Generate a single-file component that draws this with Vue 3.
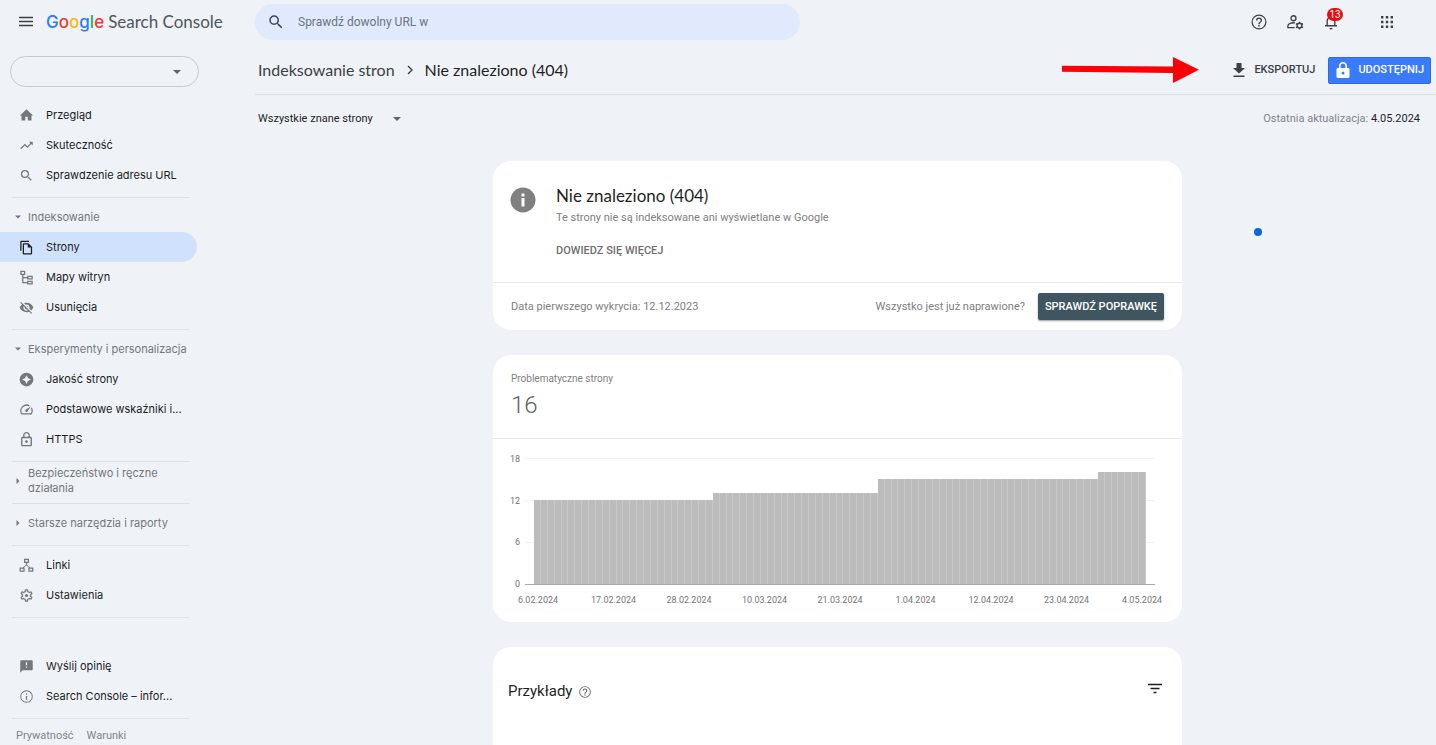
<script setup>
import { ref } from 'vue'

const icons = {
  home: 'M10 20v-6h4v6h6v-8h2.500L12 2 1.500 12H4v8z',
  trend: 'M16 6l2.290 2.290-4.880 4.880-4-4L2 16.590 3.410 18l6-6 4 4 6.300-6.290L22 12V6z',
  search: 'M15.500 14h-.79l-.28-.27A6.470 6.470 0 0 0 16 9.500 6.500 6.500 0 1 0 9.500 16c1.610 0 3.090-.59 4.230-1.570l.27.28v.79l5 4.990L20.490 19l-4.990-5zm-6 0C7.010 14 5 11.990 5 9.500S7.010 5 9.500 5 14 7.010 14 9.500 11.990 14 9.500 14z',
  pages: 'M16 1H4c-1.100 0-2 .9-2 2v14h2V3h12V1zm-1 4H8c-1.100 0-1.990.9-1.990 2L6 21c0 1.100.89 2 1.990 2H19c1.100 0 2-.9 2-2V11l-6-6zM8 21V7h6v5h5v9H8z',
  sitemap: 'M2 1h8v7H7v3h6V9h9v6h-9v-2H7v6h6v-2h9v6h-9v-2H5V8H2zM4 3v3h4V3zM15 11v2h5v-2zM15 19v2h5v-2z',
  hidden: 'M12 7c2.760 0 5 2.240 5 5 0 .65-.13 1.260-.36 1.830l2.920 2.920c1.510-1.260 2.700-2.890 3.430-4.750-1.730-4.390-6-7.500-11-7.500-1.400 0-2.740.25-3.980.7l2.160 2.160C10.740 7.130 11.350 7 12 7zM2 4.270l2.280 2.280.46.46A11.800 11.800 0 0 0 1 12c1.730 4.390 6 7.500 11 7.500 1.550 0 3.030-.3 4.380-.84l.42.42L19.730 22 21 20.730 3.270 3 2 4.270zM7.530 9.800l1.550 1.550c-.05.21-.08.43-.08.65 0 1.660 1.340 3 3 3 .22 0 .44-.03.65-.08l1.550 1.550c-.67.33-1.410.53-2.200.53-2.760 0-5-2.240-5-5 0-.79.2-1.530.53-2.200zm4.310-.78 3.150 3.150.02-.16c0-1.660-1.340-3-3-3l-.17.01z',
  quality: 'M12 1a11 11 0 1 0 0 22 11 11 0 0 0 0-22zm0 4 2.300 4.700L19 12l-4.700 2.300L12 19l-2.300-4.700L5 12l4.700-2.300z',
  speed: 'M20.380 8.570l-1.230 1.850a8 8 0 0 1-.22 7.580H5.070A8 8 0 0 1 15.580 6.850l1.850-1.230A10 10 0 0 0 3.350 19a2 2 0 0 0 1.720 1h13.850a2 2 0 0 0 1.740-1 10 10 0 0 0-.27-10.440zm-9.790 6.840a2 2 0 0 0 2.830 0l5.660-8.490-8.490 5.660a2 2 0 0 0 0 2.830z',
  lock: 'M18 8h-1V6c0-2.760-2.240-5-5-5S7 3.240 7 6v2H6c-1.100 0-2 .9-2 2v10c0 1.100.9 2 2 2h12c1.100 0 2-.9 2-2V10c0-1.100-.9-2-2-2zM9 6c0-1.660 1.340-3 3-3s3 1.340 3 3v2H9V6zm9 14H6V10h12v10zm-6-3c1.100 0 2-.9 2-2s-.9-2-2-2-2 .9-2 2 .9 2 2 2z',
  links: 'M8 1h8v7h-3v3l5 4h5v7h-8v-7h1l-4-3-4 3h1v7H1v-7h5l5-4V8H8zM10 3v3h4V3zM3 17v3h4v-3zM17 17v3h4v-3z',
  gear: 'M19.430 12.980c.04-.32.07-.64.07-.98s-.03-.66-.07-.98l2.110-1.650c.19-.15.24-.42.12-.64l-2-3.460c-.09-.16-.26-.25-.44-.25-.06 0-.12.01-.17.03l-2.490 1c-.52-.4-1.080-.73-1.690-.98l-.38-2.650A.49.49 0 0 0 14 2h-4c-.25 0-.46.18-.49.42l-.38 2.650c-.61.25-1.170.59-1.690.98l-2.490-1a.57.57 0 0 0-.18-.03c-.17 0-.34.09-.43.25l-2 3.460c-.13.22-.07.49.12.64l2.110 1.650c-.04.32-.07.65-.07.98s.03.66.07.98l-2.110 1.650c-.19.15-.24.42-.12.64l2 3.460c.09.16.26.25.44.25.06 0 .12-.01.17-.03l2.490-1c.52.4 1.080.73 1.690.98l.38 2.650c.03.24.24.42.49.42h4c.25 0 .46-.18.49-.42l.38-2.650c.61-.25 1.170-.59 1.690-.98l2.490 1c.06.02.12.03.18.03.17 0 .34-.09.43-.25l2-3.460c.12-.22.07-.49-.12-.64l-2.110-1.650zm-1.980-1.710c.04.31.05.52.05.73 0 .21-.02.43-.05.73l-.14 1.130.89.7 1.080.84-.7 1.210-1.270-.51-1.040-.42-.9.68c-.43.32-.84.56-1.250.73l-1.060.43-.16 1.130-.2 1.350h-1.400l-.19-1.350-.16-1.130-1.060-.43c-.43-.18-.83-.41-1.230-.71l-.91-.7-1.060.43-1.270.51-.7-1.210 1.080-.84.89-.7-.14-1.130c-.03-.31-.05-.54-.05-.74s.02-.43.05-.73l.14-1.130-.89-.7-1.080-.84.7-1.210 1.270.51 1.040.42.9-.68c.43-.32.84-.56 1.250-.73l1.060-.43.16-1.130.2-1.350h1.390l.19 1.350.16 1.130 1.060.43c.43.18.83.41 1.230.71l.91.7 1.060-.43 1.270-.51.7 1.210-1.070.85-.89.7.14 1.130zM12 9.500a2.500 2.500 0 1 0 0 5 2.500 2.500 0 0 0 0-5z',
  feedback: 'M20 2H4c-1.100 0-1.990.9-1.990 2L2 22l4-4h14c1.100 0 2-.9 2-2V4c0-1.100-.9-2-2-2zm-7 12h-2v-2h2v2zm0-4h-2V5h2v5z',
  info: 'M11 7h2v2h-2zm0 4h2v6h-2zm1-9a10 10 0 1 0 0 20 10 10 0 0 0 0-20zm0 18.500a8.500 8.500 0 1 1 0-17 8.500 8.500 0 0 1 0 17z',
  help: 'M11 18h2v-2h-2v2zm1-16a10 10 0 1 0 0 20 10 10 0 0 0 0-20zm0 18.400a8.400 8.400 0 1 1 0-16.800 8.400 8.400 0 0 1 0 16.800zM12 6a4 4 0 0 0-4 4h1.800c0-1.200 1-2.200 2.200-2.200s2.200 1 2.200 2.200c0 2-3.100 1.750-3.100 5h1.800c0-2.250 3.100-2.500 3.100-5a4 4 0 0 0-4-4z',
}

const groups = [
  {
    items: [
      { icon: 'home', label: 'Przegląd' },
      { icon: 'trend', label: 'Skuteczność' },
      { icon: 'search', label: 'Sprawdzenie adresu URL' },
    ],
  },
  {
    title: 'Indeksowanie',
    open: true,
    items: [
      { icon: 'pages', label: 'Strony', active: true },
      { icon: 'sitemap', label: 'Mapy witryn' },
      { icon: 'hidden', label: 'Usunięcia' },
    ],
  },
  {
    title: 'Eksperymenty i personalizacja',
    open: true,
    items: [
      { icon: 'quality', label: 'Jakość strony' },
      { icon: 'speed', label: 'Podstawowe wskaźniki i...' },
      { icon: 'lock', label: 'HTTPS', box: '2 1 20 22' },
    ],
  },
  { title: 'Bezpieczeństwo i ręczne działania', items: [] },
  { title: 'Starsze narzędzia i raporty', items: [] },
  {
    items: [
      { icon: 'links', label: 'Linki' },
      { icon: 'gear', label: 'Ustawienia' },
    ],
  },
]

const support = [
  { icon: 'feedback', label: 'Wyślij opinię' },
  { icon: 'info', label: 'Search Console – infor...' },
]

const query = ref('')
const maxValue = 18
const ticks = [18, 12, 6, 0]
const runs = [[26, 12], [24, 13], [32, 15], [7, 16]]
const bars = runs.flatMap(([days, value]) => Array(days).fill(value))
const dates = ['6.02.2024', '17.02.2024', '28.02.2024', '10.03.2024', '21.03.2024', '1.04.2024', '12.04.2024', '23.04.2024', '4.05.2024']
</script>

<template>
  <div class="shell">
    <header class="topbar">
      <div class="brand">
        <button class="icon-btn" aria-label="Menu">
          <svg class="i16" viewBox="0 0 16 16"><path d="M1 3.500h14M1 7.500h14M1 11.500h14" stroke="currentColor" stroke-width="1.400" /></svg>
        </button>
        <a href="#" class="logo"><span class="google"><span class="b">G</span><span class="r">o</span><span class="y">o</span><span class="b">g</span><span class="g">l</span><span class="r">e</span></span><span>Search Console</span></a>
      </div>
      <label class="search">
        <svg class="i18" viewBox="0 0 24 24"><path :d="icons.search" /></svg>
        <input v-model="query" type="text" placeholder="Sprawdź dowolny URL w" aria-label="Sprawdź dowolny URL" />
      </label>
      <div class="tools">
        <button class="icon-btn" aria-label="Pomoc"><svg class="i18" viewBox="0 0 24 24"><path :d="icons.help" /></svg></button>
        <button class="icon-btn" aria-label="Użytkownicy">
          <svg class="i18 outline" viewBox="0 0 24 24">
            <circle cx="10" cy="7" r="3.300" />
            <path d="M12 13.200c-4-.8-9.500 1-9.500 4V19.500H11.500" />
            <circle cx="18" cy="16.800" r="3.200" />
            <path d="M18 11.500v2M18 20v2M13.400 14.100l1.800 1.100M20.800 18.400l1.800 1.100M13.400 19.500l1.800-1.100M20.800 15.200l1.800-1.100" />
          </svg>
        </button>
        <button class="icon-btn bell" aria-label="Powiadomienia">
          <svg class="i18" viewBox="0 0 24 24"><path d="M12 22a2 2 0 0 0 2-2h-4a2 2 0 0 0 2 2zm6-6v-5c0-3.070-1.630-5.640-4.500-6.320V4a1.500 1.500 0 0 0-3 0v.68C7.640 5.360 6 7.920 6 11v5H4v2h16v-2zm-1.800 0H7.800v-5c0-2.480 1.510-4.700 4.200-4.700s4.200 2.220 4.200 4.700z" /></svg>
          <span class="badge">13</span>
        </button>
        <button class="icon-btn apps" aria-label="Aplikacje Google">
          <svg class="i18" viewBox="0 0 24 24"><path d="M4 4h3.200v3.200H4zm6.400 0h3.200v3.200h-3.200zm6.400 0H20v3.200h-3.200zM4 10.400h3.200v3.200H4zm6.400 0h3.200v3.200h-3.200zm6.400 0H20v3.200h-3.200zM4 16.800h3.200V20H4zm6.400 0h3.200V20h-3.200zm6.400 0H20V20h-3.200z" /></svg>
        </button>
      </div>
    </header>

    <div class="body">
      <nav class="sidebar" aria-label="Nawigacja">
        <div class="property">
          <select aria-label="Usługa"><option></option></select>
          <svg class="caret" viewBox="0 0 8 4"><path d="M0 0h8L4 4z" /></svg>
        </div>
        <section v-for="(group, n) in groups" :key="n" class="group">
          <button v-if="group.title" class="group-title" :aria-expanded="!!group.open">
            <svg v-if="group.open" class="fold" viewBox="0 0 6 6"><path d="M0 1.500h6L3 4.500z" /></svg>
            <svg v-else class="fold" viewBox="0 0 6 6"><path d="M1.500 0v6l3-3z" /></svg>
            <span>{{ group.title }}</span>
          </button>
          <a v-for="item in group.items" :key="item.label" href="#" class="item" :class="{ active: item.active }">
            <svg class="i15" :viewBox="item.box || '0 0 24 24'"><path :d="icons[item.icon]" fill-rule="evenodd" /></svg>
            <span>{{ item.label }}</span>
          </a>
        </section>
        <section class="group support">
          <a v-for="item in support" :key="item.label" href="#" class="item">
            <svg class="i15" viewBox="0 0 24 24"><path :d="icons[item.icon]" fill-rule="evenodd" /></svg>
            <span>{{ item.label }}</span>
          </a>
        </section>
        <footer class="legal"><a href="#">Prywatność</a><a href="#">Warunki</a></footer>
      </nav>

      <main class="main">
        <div class="titlebar">
          <div class="crumbs">
            <a href="#">Indeksowanie stron</a>
            <svg class="chevron outline" viewBox="0 0 6 10"><path d="M1 1l4 4-4 4" /></svg>
            <h1>Nie znaleziono (404)</h1>
          </div>
          <div class="actions">
            <svg class="arrow" viewBox="0 0 138 28"><path d="M1 9.800L112 10.500V1L138 13.800 112 27V17L1 15.800z" /></svg>
            <button class="export">
              <svg class="i16" viewBox="0 0 16 16"><path d="M5.500 1h5v5H14l-6 5.500L2 6h3.500zM2.500 13.500h11V15h-11z" /></svg>
              <span>EKSPORTUJ</span>
            </button>
            <button class="share">
              <svg class="share-lock" viewBox="0 0 14 18"><path d="M7 1C4.500 1 3 2.800 3 5v2H2C1 7 .5 7.600.5 8.500v7c0 .9.500 1.500 1.500 1.500h10c1 0 1.500-.6 1.500-1.500v-7c0-.9-.5-1.500-1.500-1.500h-1V5c0-2.200-1.500-4-4-4zm0 1.600c1.500 0 2.300 1 2.300 2.400v2H4.700V5c0-1.400.8-2.400 2.300-2.400zM7 10.500a1.500 1.500 0 1 1 0 3 1.500 1.500 0 0 1 0-3z" fill-rule="evenodd" /></svg>
              <span>UDOSTĘPNIJ</span>
            </button>
          </div>
        </div>

        <div class="filters">
          <div class="scope">
            <select aria-label="Zakres stron"><option>Wszystkie znane strony</option></select>
            <svg class="caret" viewBox="0 0 8 4"><path d="M0 0h8L4 4z" /></svg>
          </div>
          <p class="updated">Ostatnia aktualizacja: <time>4.05.2024</time></p>
        </div>

        <div class="content">
          <section class="card">
            <div class="issue">
              <svg class="issue-icon" viewBox="0 0 26 26"><circle cx="13" cy="13" r="12.500" fill="#808080" /><path d="M11.500 6.500h3v3h-3zM11.500 11h3v8.500h-3z" fill="#fff" /></svg>
              <div>
                <h2>Nie znaleziono (404)</h2>
                <p>Te strony nie są indeksowane ani wyświetlane w Google</p>
                <a href="#" class="more">DOWIEDZ SIĘ WIĘCEJ</a>
              </div>
            </div>
            <div class="issue-foot">
              <span>Data pierwszego wykrycia: 12.12.2023</span>
              <span class="question">Wszystko jest już naprawione?</span>
              <button class="verify">SPRAWDŹ POPRAWKĘ</button>
            </div>
          </section>

          <section class="card">
            <div class="metric">
              <h3>Problematyczne strony</h3>
              <p>16</p>
            </div>
            <div class="chart">
              <div class="ticks"><span v-for="t in ticks" :key="t">{{ t }}</span></div>
              <div class="plot">
                <div class="lines"><i v-for="t in ticks" :key="t"></i></div>
                <div class="bars">
                  <i v-for="(value, n) in bars" :key="n" :style="{ height: (value / maxValue) * 100 + '%' }"></i>
                </div>
              </div>
              <div class="dates"><span v-for="d in dates" :key="d">{{ d }}</span></div>
            </div>
          </section>

          <section class="card examples">
            <h2>Przykłady</h2>
            <button class="icon-btn" aria-label="Informacje o przykładach"><svg class="i14" viewBox="0 0 24 24"><path :d="icons.help" /></svg></button>
            <button class="icon-btn filter" aria-label="Filtruj"><svg class="i16" viewBox="0 0 16 16"><path d="M1 3.500h14M3.500 7.500h9M6.500 11.500h3" stroke="currentColor" stroke-width="1.400" /></svg></button>
          </section>
          <span class="dot"></span>
        </div>
      </main>
    </div>
  </div>
</template>

<style>
body {
  margin: 0;
  background: #eff3f8;
}
</style>

<style scoped>
* {
  box-sizing: border-box;
}
.shell {
  height: 100vh;
  overflow: hidden;
  display: flex;
  flex-direction: column;
  background: #eff3f8;
  color: #1f1f1f;
  font: 11px/16px Roboto, "Liberation Sans", sans-serif;
}
button,
input,
select {
  font: inherit;
  color: inherit;
  border: 0;
  padding: 0;
  margin: 0;
  background: none;
}
h1,
h2,
h3,
p {
  margin: 0;
  font-weight: 400;
}
a {
  color: inherit;
  text-decoration: none;
}
svg {
  display: block;
  flex: none;
  fill: currentColor;
}
.outline {
  fill: none;
  stroke: currentColor;
  stroke-width: 1.8;
}
.i14 {
  width: 14px;
  height: 14px;
}
.i15 {
  width: 15px;
  height: 15px;
}
.i16 {
  width: 16px;
  height: 16px;
}
.i18 {
  width: 18px;
  height: 18px;
}
.icon-btn {
  display: flex;
  color: #3c4043;
}
.topbar {
  flex: none;
  display: flex;
  align-items: center;
  height: 44px;
}
.brand {
  flex: none;
  width: 255px;
  display: flex;
  align-items: center;
  gap: 12px;
  padding-left: 18px;
}
.logo {
  display: flex;
  align-items: baseline;
  gap: 4px;
  font: 17px/24px Lato, sans-serif;
  color: #50555a;
  white-space: nowrap;
}
.google {
  font-family: Inter, sans-serif;
  font-weight: 500;
}
.b { color: #2a7af3; }
.r { color: #ea3a2f; }
.y { color: #fbb904; }
.g { color: #34a853; }
.search {
  flex: 0 1 545px;
  display: flex;
  align-items: center;
  gap: 13px;
  height: 36px;
  padding: 0 12px;
  border-radius: 18px;
  background: #e0eafc;
  color: #3c4657;
}
.search input {
  flex: 1;
  min-width: 0;
  font-size: 12px;
  outline: 0;
}
.search input::placeholder {
  color: #6c7480;
  opacity: 1;
}
.tools {
  margin-left: auto;
  display: flex;
  align-items: center;
  gap: 18px;
  padding-right: 40px;
}
.bell {
  position: relative;
}
.badge {
  position: absolute;
  top: -5px;
  left: 5px;
  min-width: 16px;
  height: 13px;
  border-radius: 7px;
  background: #e50f0f;
  color: #fff;
  font-size: 10px;
  line-height: 13px;
  text-align: center;
}
.apps {
  margin-left: 20px;
}
.body {
  flex: 1;
  min-height: 0;
  display: flex;
}
.sidebar {
  flex: none;
  width: 239px;
  padding-top: 12px;
  font: 11px/15px Inter, sans-serif;
}
.property {
  position: relative;
  width: 189px;
  height: 31px;
  margin: 0 0 13px 10px;
}
.property select {
  width: 100%;
  height: 100%;
  appearance: none;
  border: 1px solid #c6c9ce;
  border-radius: 16px;
}
.caret {
  width: 8px;
  height: 4px;
  color: #5f6368;
  pointer-events: none;
}
.property .caret {
  position: absolute;
  right: 18px;
  top: 14px;
}
.group::after {
  content: "";
  display: block;
  width: 177px;
  margin: 7px 0 4px 12px;
  border-top: 1px solid #dde1e7;
}
.item {
  display: flex;
  align-items: center;
  gap: 12px;
  width: 197px;
  height: 30px;
  padding-left: 19px;
  color: #1b1c1e;
  white-space: nowrap;
}
.item svg {
  color: #74777b;
}
.item.active {
  border-radius: 0 15px 15px 0;
  background: #d0e1fd;
}
.item.active svg {
  color: #1b1c1e;
}
.group-title {
  display: flex;
  align-items: center;
  gap: 7px;
  width: 197px;
  height: 30px;
  padding-left: 15px;
  color: #74777b;
  text-align: left;
}
.fold {
  width: 6px;
  height: 6px;
}
.support {
  margin-top: 33px;
}
.legal {
  display: flex;
  gap: 13px;
  padding: 5px 16px;
  color: #80848a;
  font-family: Roboto, sans-serif;
}
.main {
  flex: 1;
  min-width: 0;
  display: flex;
  flex-direction: column;
}
.titlebar {
  flex: none;
  display: flex;
  align-items: center;
  justify-content: space-between;
  height: 51px;
  margin-left: 16px;
  padding: 2px 5px 0 3px;
  border-bottom: 1px solid #dbdfe5;
}
.crumbs {
  display: flex;
  align-items: center;
  gap: 12px;
  color: #3c4043;
  font: 16px/20px Lato, sans-serif;
}
.crumbs h1 {
  color: #1f1f1f;
  font-size: 16px;
}
.chevron {
  width: 6px;
  height: 10px;
  stroke-width: 1.4;
}
.actions {
  display: flex;
  align-items: center;
  font-size: 11px;
  font-weight: 500;
}
.arrow {
  width: 138px;
  height: 28px;
  margin-right: 32px;
  color: #fb0007;
}
.export {
  display: flex;
  align-items: center;
  gap: 7px;
  margin-right: 13px;
  color: #3c4043;
}
.share {
  display: flex;
  align-items: center;
  gap: 8px;
  height: 27px;
  padding: 0 6px 0 7px;
  border: 1px solid #2b6be8;
  border-radius: 2px;
  background: #3a7bfa;
  color: #fff;
}
.share-lock {
  width: 14px;
  height: 18px;
}
.filters {
  flex: none;
  display: flex;
  align-items: center;
  justify-content: space-between;
  height: 48px;
  padding: 0 16px 0 19px;
}
.scope {
  display: flex;
  align-items: center;
}
.scope select {
  appearance: none;
  padding-right: 30px;
  margin-right: -10px;
}
.updated {
  color: #80848a;
}
.updated time {
  color: #1f1f1f;
}
.content {
  position: relative;
  flex: 1;
  min-height: 0;
  display: flex;
  flex-direction: column;
  align-items: center;
  gap: 25px;
  padding: 18px 16px 0;
}
.card {
  flex: none;
  width: 100%;
  max-width: 689px;
  border-radius: 18px;
  background: #fff;
}
.issue {
  display: flex;
  gap: 20px;
  height: 121px;
  padding: 25px 17px 0;
}
.issue-icon {
  width: 26px;
  height: 26px;
  margin-top: 1px;
}
.issue h2 {
  font: 17px/20px Lato, sans-serif;
}
.issue p {
  margin: 4px 0 17px;
  color: #808080;
}
.more {
  color: #6e6e6e;
  font-weight: 500;
}
.issue-foot {
  display: flex;
  align-items: center;
  height: 48px;
  padding: 0 18px;
  border-top: 1px solid #e8eaed;
  color: #808080;
}
.question {
  margin: 0 13px 0 auto;
}
.verify {
  height: 27px;
  padding: 0 7px;
  border-radius: 2px;
  background: #3f5661;
  box-shadow: 0 1px 2px rgba(0, 0, 0, 0.4);
  color: #fff;
  font-weight: 500;
}
.metric {
  height: 84px;
  padding: 17px 18px 0;
  border-bottom: 1px solid #e8eaed;
}
.metric h3 {
  color: #808080;
  font-size: 10px;
  line-height: 14px;
}
.metric p {
  margin-top: 5px;
  color: #616161;
  font-size: 24px;
  font-weight: 300;
  line-height: 28px;
}
.chart {
  display: grid;
  grid-template-columns: 27px 1fr;
  column-gap: 5px;
  padding: 19px 27px 16px 0;
  color: #757575;
  font-size: 9px;
  line-height: 12px;
}
.ticks {
  display: flex;
  flex-direction: column;
  justify-content: space-between;
  margin: -5px 0;
  text-align: right;
}
.plot {
  display: grid;
  height: 127px;
}
.lines,
.bars {
  grid-area: 1 / 1;
}
.lines {
  display: flex;
  flex-direction: column;
  justify-content: space-between;
}
.lines i {
  border-top: 1px solid #f1f1f1;
}
.lines i:last-child {
  border-color: #a8a8a8;
}
.bars {
  position: relative;
  display: flex;
  align-items: flex-end;
  padding: 0 9px;
  margin-bottom: 1px;
}
.bars i {
  flex: 1;
  background: #bcbcbc;
  border-right: 1px solid #c8c8c8;
}
.dates {
  grid-column: 2;
  display: flex;
  justify-content: space-between;
  margin-top: 9px;
  padding: 0 13px;
}
.dates span {
  width: 0;
  display: flex;
  justify-content: center;
  white-space: nowrap;
}
.examples {
  display: flex;
  align-items: flex-start;
  min-height: 160px;
  padding: 34px 19px 0 15px;
}
.examples h2 {
  font-size: 15px;
  line-height: 20px;
}
.examples .icon-btn {
  margin: 4px 0 0 6px;
  color: #616161;
}
.examples .filter {
  margin: 0 0 0 auto;
  color: #1f1f1f;
}
.dot {
  position: absolute;
  top: 85px;
  right: 174px;
  width: 8px;
  height: 8px;
  border-radius: 50%;
  background: #0b69d6;
}
</style>
